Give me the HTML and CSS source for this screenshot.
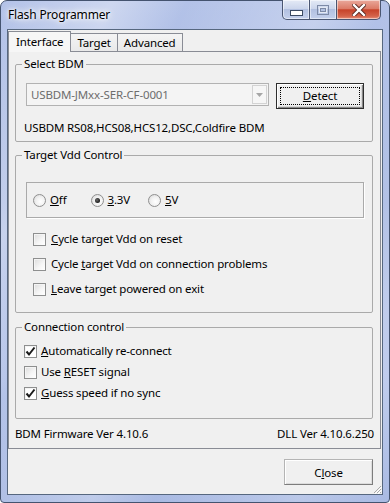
FILE: index.html
```html
<!DOCTYPE html>
<html lang="en">
<head>
    <meta charset="UTF-8">
    <title>Flash Programmer</title>
    <link rel="stylesheet" href="styles.css">
</head>
<body>

<div class="window">
    <div class="titlebar">
        <span class="title">Flash Programmer</span>
        <div class="caption-buttons">
            <span class="cap cap-min">
                <svg width="13" height="6" viewBox="0 0 13 6"><rect x="0.5" y="0.5" width="12" height="5" fill="#fff" stroke="#3b4a63"/></svg>
            </span>
            <span class="cap cap-max">
                <svg width="12" height="10" viewBox="0 0 12 10"><rect x="0.5" y="0.5" width="11" height="9" fill="none" stroke="#7d8aa6"/><rect x="2.5" y="2.5" width="7" height="5" fill="none" stroke="#e4e9f4"/><rect x="3.5" y="3.5" width="5" height="3" fill="none" stroke="#7d8aa6"/></svg>
            </span>
            <span class="cap cap-close">
                <svg width="14" height="12" viewBox="0 0 14 12"><path d="M2 1 L12 11 M12 1 L2 11" stroke="#5a2a22" stroke-width="4.2" stroke-linecap="square"/><path d="M2 1 L12 11 M12 1 L2 11" stroke="#fff" stroke-width="2.4" stroke-linecap="square"/></svg>
            </span>
        </div>
    </div>

    <div class="client">
        <div class="tabs">
            <div class="tab active">Interface</div>
            <div class="tab">Target</div>
            <div class="tab">Advanced</div>
        </div>

        <div class="panel">
            <fieldset class="group group-bdm">
                <legend>Select BDM</legend>
                <div class="bdm-row">
                    <div class="combo">
                        <span class="combo-text">USBDM-JMxx-SER-CF-0001</span>
                        <span class="combo-arrow">
                            <svg width="7" height="4" viewBox="0 0 7 4"><path d="M0 0 H7 L3.5 4 Z" fill="#a6a6a6"/></svg>
                        </span>
                    </div>
                    <button class="btn btn-default"><span class="focus-rect"><u>D</u>etect</span></button>
                </div>
                <p class="bdm-desc">USBDM RS08,HCS08,HCS12,DSC,Coldfire BDM</p>
            </fieldset>

            <fieldset class="group group-vdd">
                <legend>Target Vdd Control</legend>
                <div class="radio-frame">
                    <label class="radio-item"><span class="radio"></span><span><u>O</u>ff</span></label>
                    <label class="radio-item"><span class="radio checked"></span><span><u>3</u>.3V</span></label>
                    <label class="radio-item"><span class="radio"></span><span><u>5</u>V</span></label>
                </div>
                <div class="check-list vdd-checks">
                    <label class="check-item"><span class="checkbox"></span><span><u>C</u>ycle target Vdd on reset</span></label>
                    <label class="check-item"><span class="checkbox"></span><span>Cycle <u>t</u>arget Vdd on connection problems</span></label>
                    <label class="check-item"><span class="checkbox"></span><span><u>L</u>eave target powered on exit</span></label>
                </div>
            </fieldset>

            <fieldset class="group group-conn">
                <legend>Connection control</legend>
                <div class="check-list conn-checks">
                    <label class="check-item"><span class="checkbox checked"><svg width="11" height="11" viewBox="0 0 11 11"><path d="M1.5 5.5 L4 8.5 L9.5 1.5" fill="none" stroke="#1a1a1a" stroke-width="2"/></svg></span><span><u>A</u>utomatically re-connect</span></label>
                    <label class="check-item"><span class="checkbox"></span><span>Use <u>R</u>ESET signal</span></label>
                    <label class="check-item"><span class="checkbox checked"><svg width="11" height="11" viewBox="0 0 11 11"><path d="M1.5 5.5 L4 8.5 L9.5 1.5" fill="none" stroke="#1a1a1a" stroke-width="2"/></svg></span><span><u>G</u>uess speed if no sync</span></label>
                </div>
            </fieldset>

            <div class="versions">
                <span>BDM Firmware Ver 4.10.6</span>
                <span>DLL Ver 4.10.6.250</span>
            </div>
        </div>

        <div class="footer">
            <button class="btn btn-close">C<u>l</u>ose</button>
        </div>

        <svg class="grip" width="9" height="9" viewBox="0 0 9 9">
            <path d="M8 1 L1 8 M8 4 L4 8 M8 7 L7 8" stroke="#a8a8a8" stroke-width="1"/>
            <path d="M9 2 L2 9 M9 5 L5 9" stroke="#fff" stroke-width="1"/>
        </svg>
    </div>
</div>

</body>
</html>
```

FILE: styles.css
```css
body {
    margin: 0;
    padding: 0;
    font-family: "Noto Sans", sans-serif;
    font-size: 11.5px;
    letter-spacing: -0.15px;
    color: #000;
}

.window {
    box-sizing: border-box;
    width: 390px;
    height: 503px;
    border: 1px solid #44536f;
    border-radius: 7px 7px 4px 4px;
    padding: 0 6px 7px 6px;
    display: flex;
    flex-direction: column;
    background:
        linear-gradient(115deg, rgba(255,255,255,0) 0%, rgba(255,255,255,0.35) 18%, rgba(255,255,255,0) 30%, rgba(255,255,255,0.25) 52%, rgba(255,255,255,0) 62%, rgba(255,255,255,0.2) 85%, rgba(255,255,255,0) 100%),
        linear-gradient(180deg, #b3c2e8 0%, #a7b8e2 40%, #b6c5ea 75%, #a9bae3 100%);
}

.titlebar {
    height: 28px;
    display: flex;
    justify-content: space-between;
    align-items: flex-start;
}

.title {
    margin: 6px 0 0 1px;
    line-height: 16px;
    font-size: 12px;
    text-shadow: 0 0 6px #fff, 0 0 3px #fff, 0 0 10px #fff;
}

.caption-buttons {
    display: flex;
    margin: -1px 2px 0 0;
}

.cap {
    box-sizing: border-box;
    height: 20px;
    border: 1px solid #4a5672;
    border-top: none;
    display: flex;
    align-items: flex-end;
    justify-content: center;
    padding-bottom: 3px;
    background: linear-gradient(180deg, #e4eaf6 0%, #ccd6ec 45%, #b2c0e0 50%, #c4d0ec 100%);
    box-shadow: inset 0 0 0 1px rgba(255,255,255,0.5);
}

.cap-min {
    width: 28px;
    border-radius: 0 0 0 5px;
}

.cap-max {
    width: 27px;
    border-left: none;
    align-items: center;
    padding-bottom: 0;
}

.cap-close {
    width: 44px;
    border-left: none;
    border-radius: 0 0 5px 0;
    align-items: center;
    padding-bottom: 0;
    background: linear-gradient(180deg, #eaa99c 0%, #dc7c68 45%, #c7432a 52%, #d4634a 85%, #e8907a 100%);
}

.client {
    flex: 1;
    position: relative;
    background: #f0f0f0;
    border: 1px solid #56677f;
    display: flex;
    flex-direction: column;
}

.tabs {
    display: flex;
    align-items: flex-end;
    height: 21px;
    position: relative;
    z-index: 1;
}

.tab {
    box-sizing: border-box;
    height: 18px;
    border: 1px solid #898c95;
    border-bottom: none;
    margin-left: -1px;
    padding: 0 6px;
    line-height: 17px;
    background: linear-gradient(180deg, #f4f4f4 0%, #e9e9e9 100%);
}

.tab.active {
    height: 21px;
    margin-left: 0;
    margin-bottom: -1px;
    padding: 0 7px 0 7px;
    line-height: 20px;
    background: #f6f6f6;
}

.panel {
    box-sizing: border-box;
    height: 398px;
    margin-right: 1px;
    border: 1px solid #898c95;
    background: #f0f0f0;
    padding: 4px 7px 0 6px;
    display: flex;
    flex-direction: column;
}

.group {
    margin: 0;
    min-width: 0;
    border: 1px solid #aaaaaa;
    border-radius: 2px;
}

.group legend {
    padding: 0 2px;
    margin-left: -2px;
    line-height: 16px;
}

.group-bdm {
    padding: 11px 8px 5px 8px;
}

.group-vdd {
    margin-top: 5px;
    padding: 19px 8px 15px 8px;
}

.group-conn {
    margin-top: 6px;
    padding: 8px 8px 17px 8px;
}

.bdm-row {
    display: flex;
    align-items: flex-start;
    margin-left: 2px;
}

.combo {
    box-sizing: border-box;
    flex: 1;
    height: 23px;
    border: 1px solid #b2b2b2;
    background: #f4f4f4;
    display: flex;
    align-items: center;
    justify-content: space-between;
    padding: 0 1px 0 4px;
}

.combo-text {
    color: #6d6d6d;
}

.combo-arrow {
    box-sizing: border-box;
    width: 15px;
    height: 19px;
    border: 1px solid #d3d3d3;
    background: #f6f6f6;
    display: flex;
    align-items: center;
    justify-content: center;
}

.btn {
    font-family: inherit;
    font-size: 11.5px;
    letter-spacing: -0.15px;
    color: #000;
    background: #f0f0f0;
    cursor: pointer;
}

.btn-default {
    box-sizing: border-box;
    width: 88px;
    height: 26px;
    margin-left: 7px;
    padding: 3px;
    border: 1px solid #2e2e2e;
    box-shadow: inset 1px 1px 0 #fff, inset -1px -1px 0 #8a8a8a, inset -2px -2px 0 #d8d8d8;
    display: flex;
}

.focus-rect {
    flex: 1;
    border: 1px dotted #000;
    display: flex;
    align-items: center;
    justify-content: center;
    line-height: 14px;
}

.bdm-desc {
    margin: 11px 0 0 0;
    line-height: 16px;
}

.radio-frame {
    box-sizing: border-box;
    height: 36px;
    margin-left: 2px;
    border: 1px solid #aaaaaa;
    box-shadow: 1px 1px 0 #fff;
    display: flex;
    align-items: center;
    padding-left: 6px;
}

.radio-item {
    width: 57.5px;
    display: flex;
    align-items: center;
    gap: 4px;
    line-height: 16px;
}

.radio {
    box-sizing: border-box;
    width: 13px;
    height: 13px;
    border: 1px solid #8f8f8f;
    border-radius: 50%;
    background: radial-gradient(circle at 60% 60%, #ffffff 0%, #f2f2f2 45%, #d4d4d4 100%);
    display: flex;
    align-items: center;
    justify-content: center;
}

.radio.checked::after {
    content: "";
    width: 5px;
    height: 5px;
    border-radius: 50%;
    background: radial-gradient(circle at 40% 40%, #6a6a6a 0%, #111 80%);
}

.check-list {
    display: flex;
    flex-direction: column;
}

.vdd-checks {
    margin: 13px 0 0 9px;
    gap: 9px;
}

.conn-checks {
    gap: 5px;
}

.check-item {
    display: flex;
    align-items: center;
    gap: 5px;
    line-height: 16px;
}

.conn-checks .check-item {
    gap: 4px;
}

.checkbox {
    box-sizing: border-box;
    width: 13px;
    height: 13px;
    border: 1px solid #8e8f8f;
    background: linear-gradient(135deg, #dcdcdc 0%, #f6f6f6 60%, #ffffff 100%);
    box-shadow: inset 1px 1px 0 #f4f4f4;
    display: flex;
    align-items: center;
    justify-content: center;
}

.checkbox.checked {
    background: #fff;
}

.versions {
    display: flex;
    justify-content: space-between;
    margin: 7px -1px 0 0;
    line-height: 16px;
}

.footer {
    display: flex;
    justify-content: flex-end;
    padding: 10px 9px 0 0;
}

.btn-close {
    box-sizing: border-box;
    width: 89px;
    height: 26px;
    border: 1px solid;
    border-color: #b4b4b4 #7c7c7c #7c7c7c #b4b4b4;
    box-shadow: inset 1px 1px 0 #fff, inset -1px -1px 0 #dcdcdc;
    padding: 0;
}

.grip {
    position: absolute;
    right: 0;
    bottom: 0;
}
```
